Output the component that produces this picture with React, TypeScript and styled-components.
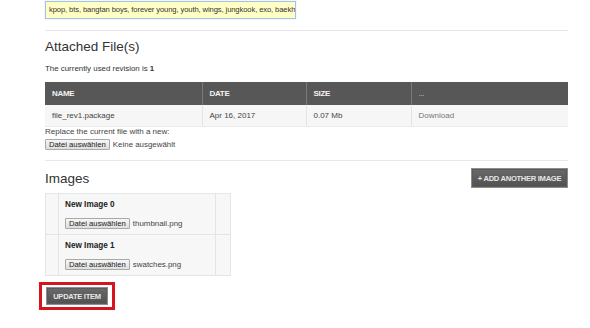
import styled, { createGlobalStyle } from "styled-components";

const GlobalStyle = createGlobalStyle`
  html, body {
    margin: 0;
    padding: 0;
    background: #fff;
  }
  body {
    font-family: "Liberation Sans", Arial, sans-serif;
    color: #333;
  }
`;

const files = [
  { name: "file_rev1.package", date: "Apr 16, 2017", size: "0.07 Mb" },
];

const images = [
  { title: "New Image 0", file: "thumbnail.png" },
  { title: "New Image 1", file: "swatches.png" },
];

const Page = styled.div`
  width: 523px;
  padding: 1px 0 0 45px;
`;

const TagsInput = styled.div`
  box-sizing: border-box;
  width: 251px;
  height: 18px;
  padding: 0 3px;
  background: #ffffc6;
  border: 1px solid #9fc3ec;
  box-shadow: 0 0 1px #b8d4f3;
  font-size: 7.6px;
  letter-spacing: -0.1px;
  line-height: 16px;
  color: #333;
  white-space: nowrap;
  overflow: hidden;
`;

const Divider = styled.hr<{ $top: number }>`
  margin: ${(p) => p.$top}px 0 0;
  border: 0;
  border-top: 1px solid #e8e8e8;
  height: 0;
`;

const SectionHead = styled.div<{ $top: number }>`
  display: flex;
  align-items: center;
  justify-content: space-between;
  margin-top: ${(p) => p.$top}px;
`;

const Heading = styled.h3`
  margin: 0;
  font-size: 13.5px;
  font-weight: normal;
  line-height: 19px;
  color: #333;
`;

const Note = styled.p`
  margin: 7px 0 0;
  font-size: 7.9px;
  line-height: 12px;
  color: #333;

  b {
    font-weight: bold;
  }
`;

const FileTable = styled.table`
  width: 523px;
  margin-top: 7px;
  border-collapse: collapse;
  font-size: 8px;
`;

const HeadCell = styled.th<{ $w: number; $muted?: boolean }>`
  width: ${(p) => p.$w}px;
  height: 23px;
  padding: 0 0 0 7px;
  box-sizing: border-box;
  background: #575757;
  border-left: 1px solid #7a7a7a;
  color: ${(p) => (p.$muted ? "#9a9a9a" : "#f2f2f2")};
  font-weight: bold;
  text-align: left;
  letter-spacing: -0.3px;

  &:first-child {
    border-left: 0;
  }
`;

const Cell = styled.td<{ $muted?: boolean }>`
  height: 21px;
  padding: 0 0 0 7px;
  background: #f6f6f6;
  border-left: 1px solid #e3e3e3;
  border-bottom: 1px solid #ebebeb;
  color: ${(p) => (p.$muted ? "#777" : "#444")};

  &:first-child {
    border-left: 0;
  }
`;

const ReplaceText = styled.div`
  font-size: 8px;
  line-height: 10px;
  color: #444;
`;

const FileRow = styled.div<{ $top?: number }>`
  display: flex;
  align-items: center;
  gap: 3px;
  margin-top: ${(p) => p.$top ?? 0}px;
  font-size: 7.9px;
  color: #444;
`;

const FileButton = styled.button`
  box-sizing: border-box;
  height: 11px;
  padding: 0 3px;
  font-family: "Liberation Sans", Arial, sans-serif;
  font-size: 7.7px;
  line-height: 9px;
  color: #222;
  background: linear-gradient(#f6f6f6, #dedede);
  border: 1px solid #a9a9a9;
  border-radius: 1px;
`;

const DarkButton = styled.button`
  box-sizing: border-box;
  padding: 0;
  font-family: "Liberation Sans", Arial, sans-serif;
  font-weight: bold;
  font-size: 7.6px;
  letter-spacing: -0.3px;
  color: #e6e6e6;
  background: linear-gradient(#6a6a6a, #505050);
  border: 1px solid #8c8c8c;
  box-shadow: inset 0 0 0 1px #5a5a5a;
  text-transform: uppercase;
`;

const AddButton = styled(DarkButton)`
  width: 97px;
  height: 20px;
`;

const ImageTable = styled.table`
  width: 186px;
  margin-top: 5px;
  border-collapse: collapse;
  background: #f7f7f7;
  border: 1px solid #e6e6e6;
`;

const SideCell = styled.td<{ $w: number }>`
  width: ${(p) => p.$w}px;
  border-left: 1px solid #e4e4e4;
  border-bottom: 1px solid #e4e4e4;
  padding: 0;
`;

const ImageCell = styled.td`
  height: 41px;
  box-sizing: border-box;
  padding: 5px 0 0 6px;
  vertical-align: top;
  border-left: 1px solid #e4e4e4;
  border-bottom: 1px solid #e4e4e4;
`;

const ImageTitle = styled.div`
  font-size: 8.2px;
  font-weight: bold;
  line-height: 12px;
  color: #222;
`;

const UpdateFrame = styled.div`
  display: inline-block;
  margin: 6px 0 0 -6px;
  padding: 2px 4px;
  border: 3px solid #d9131c;
`;

const UpdateButton = styled(DarkButton)`
  display: block;
  width: 62px;
  height: 18px;
`;

export default function App() {
  return (
    <>
      <GlobalStyle />
      <Page>
        <TagsInput>
          kpop, bts, bangtan boys, forever young, youth, wings, jungkook, exo, baekhyun
        </TagsInput>
        <Divider $top={11} />
        <SectionHead $top={6}>
          <Heading>Attached File(s)</Heading>
        </SectionHead>
        <Note>
          The currently used revision is <b>1</b>
        </Note>
        <FileTable>
          <thead>
            <tr>
              <HeadCell $w={157}>NAME</HeadCell>
              <HeadCell $w={104}>DATE</HeadCell>
              <HeadCell $w={105}>SIZE</HeadCell>
              <HeadCell $w={157} $muted>...</HeadCell>
            </tr>
          </thead>
          <tbody>
            {files.map((f) => (
              <tr key={f.name}>
                <Cell>{f.name}</Cell>
                <Cell>{f.date}</Cell>
                <Cell>{f.size}</Cell>
                <Cell $muted>Download</Cell>
              </tr>
            ))}
          </tbody>
        </FileTable>
        <ReplaceText>Replace the current file with a new:</ReplaceText>
        <FileRow $top={2}>
          <FileButton>Datei auswählen</FileButton>
          <span>Keine ausgewählt</span>
        </FileRow>
        <Divider $top={10} />
        <SectionHead $top={7}>
          <Heading>Images</Heading>
          <AddButton>+ Add another image</AddButton>
        </SectionHead>
        <ImageTable>
          <tbody>
            {images.map((img) => (
              <tr key={img.title}>
                <SideCell $w={12} />
                <ImageCell>
                  <ImageTitle>{img.title}</ImageTitle>
                  <FileRow $top={7}>
                    <FileButton>Datei auswählen</FileButton>
                    <span>{img.file}</span>
                  </FileRow>
                </ImageCell>
                <SideCell $w={14} />
              </tr>
            ))}
          </tbody>
        </ImageTable>
        <UpdateFrame>
          <UpdateButton>Update item</UpdateButton>
        </UpdateFrame>
      </Page>
    </>
  );
}
